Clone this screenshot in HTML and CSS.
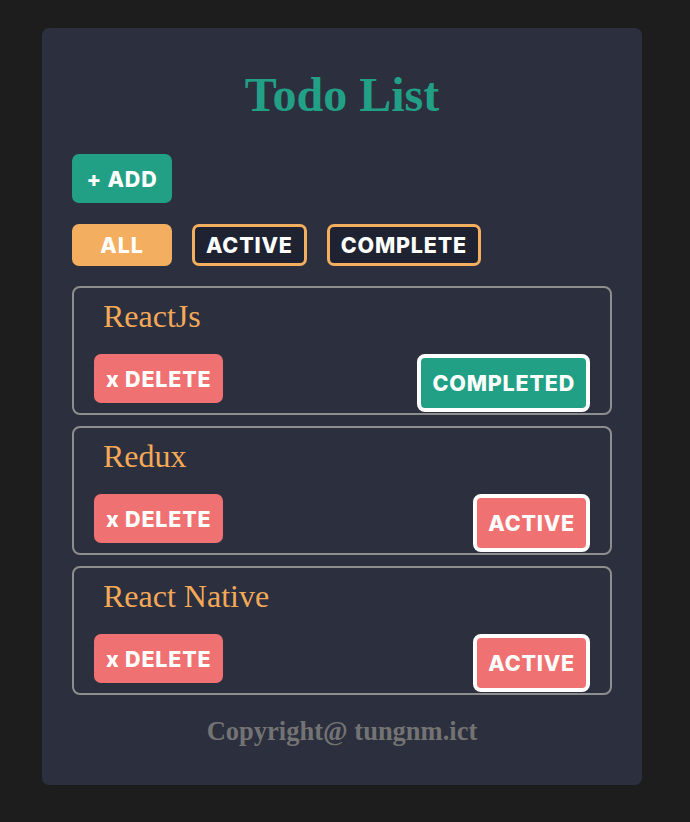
FILE: index.html
```html
<!DOCTYPE html>
<html lang="en">
<head>
<meta charset="utf-8">
<title>Todo List</title>
<link rel="stylesheet" href="styles.css">
</head>
<body>
<div class="card">
  <h1 class="title">Todo List</h1>
  <div class="add-row">
    <button class="btn btn-add">+ ADD</button>
  </div>
  <div class="filters">
    <button class="btn filter filter-on">ALL</button>
    <button class="btn filter">ACTIVE</button>
    <button class="btn filter">COMPLETE</button>
  </div>
  <ul class="list">
    <li class="item">
      <div class="item-name">ReactJs</div>
      <div class="item-actions">
        <button class="btn btn-delete">x DELETE</button>
        <button class="btn status status-done">COMPLETED</button>
      </div>
    </li>
    <li class="item">
      <div class="item-name">Redux</div>
      <div class="item-actions">
        <button class="btn btn-delete">x DELETE</button>
        <button class="btn status status-active">ACTIVE</button>
      </div>
    </li>
    <li class="item">
      <div class="item-name">React Native</div>
      <div class="item-actions">
        <button class="btn btn-delete">x DELETE</button>
        <button class="btn status status-active">ACTIVE</button>
      </div>
    </li>
  </ul>
  <div class="footer">Copyright@ tungnm.ict</div>
</div>
</body>
</html>
```

FILE: styles.css
```css
html, body {
  margin: 0;
  padding: 0;
  background: #1d1d1d;
}

body {
  padding-top: 28px;
  height: 822px;
  box-sizing: border-box;
  overflow: hidden;
}

.card {
  width: 600px;
  margin-left: 42px;
  box-sizing: border-box;
  background: #2c2f3e;
  border-radius: 7px;
  padding: 41px 30px 39px;
}

.title {
  margin: 0;
  text-align: center;
  font-family: "Liberation Serif", "Times New Roman", serif;
  font-weight: 700;
  font-size: 48px;
  line-height: 52px;
  color: #22a085;
}

.btn {
  font-family: Inter, "Liberation Sans", sans-serif;
  font-weight: 800;
  font-size: 21.5px;
  letter-spacing: 0.8px;
  color: #ffffff;
  border: none;
  margin: 0;
  padding: 0 12px;
  box-sizing: border-box;
  display: flex;
  align-items: center;
  justify-content: center;
  cursor: pointer;
}

.add-row {
  margin-top: 33px;
  display: flex;
}

.btn-add {
  min-width: 100px;
  height: 49px;
  background: #22a085;
  border-radius: 7px;
}

.filters {
  margin-top: 21px;
  display: flex;
  gap: 20px;
}

.filter {
  min-width: 100px;
  height: 42px;
  padding: 0 11px;
  background: #1f2231;
  border: 3px solid #f4ae5f;
  border-radius: 7px;
}

.filter-on {
  background: #f4ae5f;
}

.list {
  list-style: none;
  margin: 20px 0 0;
  padding: 0;
  display: flex;
  flex-direction: column;
  gap: 11px;
}

.item {
  border: 2px solid #8e8e8e;
  border-radius: 8px;
  padding: 11px 20px 1px;
}

.item-name {
  padding-left: 9px;
  font-family: "Liberation Serif", "Times New Roman", serif;
  font-size: 32px;
  line-height: 34px;
  color: #f4a958;
}

.item-actions {
  margin-top: 21px;
  display: flex;
  justify-content: space-between;
  align-items: flex-start;
}

.btn-delete {
  height: 49px;
  background: #f07171;
  border-radius: 7px;
}

.status {
  height: 58px;
  border: 4px solid #ffffff;
  border-radius: 8px;
  padding: 0 11px;
}

.status-done {
  background: #22a085;
}

.status-active {
  background: #f07171;
}

.footer {
  margin-top: 21px;
  text-align: center;
  font-family: "Liberation Serif", "Times New Roman", serif;
  font-weight: 700;
  font-size: 26.5px;
  line-height: 30px;
  color: #737373;
}
```
